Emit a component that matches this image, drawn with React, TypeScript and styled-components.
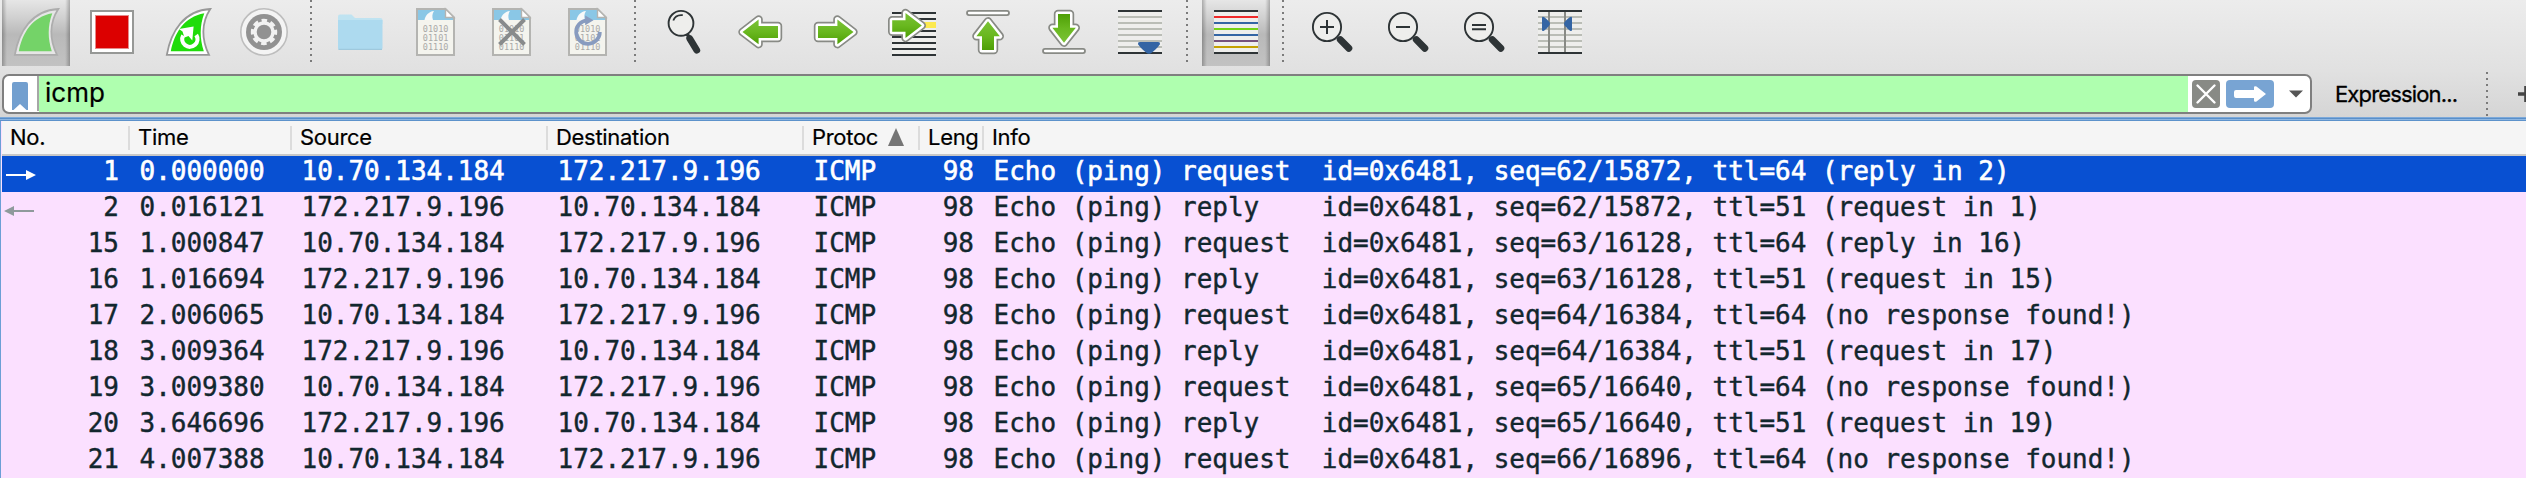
import React from "react";
import styled, { createGlobalStyle, css } from "styled-components";

const GlobalStyle = createGlobalStyle`
  html, body { margin: 0; padding: 0; background: #fbe0ff; overflow: hidden; }
  * { box-sizing: border-box; }
`;

const Window = styled.div`
  display: flex;
  flex-direction: column;
  width: 2526px;
  height: 478px;
  overflow: hidden;
  font-family: Inter, "Liberation Sans", sans-serif;
  color: #000;
`;

const Chrome = styled.header`
  flex: none;
  height: 117px;
  background: linear-gradient(#ececec, #e1e1e1 60%, #d5d5d5);
`;

const Toolbar = styled.div`
  display: flex;
  align-items: flex-start;
  height: 74px;
  padding-left: 2px;
`;

const ToolGroup = styled.div`
  display: flex;
  gap: 8px;
`;

const ToolButton = styled.button<{ $pressed?: boolean }>`
  width: 68px;
  height: 66px;
  padding: 0;
  border: 0;
  background: none;
  ${(p) =>
    p.$pressed &&
    css`
      background:
        linear-gradient(90deg, rgba(0, 0, 0, 0.25), rgba(0, 0, 0, 0.04) 4px, transparent 5px, transparent 63px, rgba(0, 0, 0, 0.04) 64px, rgba(0, 0, 0, 0.25)),
        linear-gradient(#e6e6e6, #d2d2d2 25%, #b9b9b9 52%, #c2c2c2);
    `}
  svg { display: block; }
`;

const Dots = styled.div<{ $height: number }>`
  flex: none;
  width: 2px;
  height: ${(p) => p.$height}px;
  background: repeating-linear-gradient(#7b7b7b 0 2px, transparent 2px 6px);
`;

const ToolDots = styled(Dots)`
  margin: 0 14px 0 12px;
`;

const FilterBar = styled.div`
  display: flex;
  height: 42px;
  padding-left: 2px;
`;

const FilterBox = styled.div`
  display: flex;
  flex: none;
  width: 2310px;
  height: 40px;
  border: 2px solid #7f7f7f;
  border-radius: 7px;
  background: #fff;
  overflow: hidden;
`;

const Bookmark = styled.button`
  flex: none;
  width: 35px;
  height: 35px;
  padding: 4px 0 0 8px;
  border: 0;
  border-right: 2px solid #a6a6a6;
  background: none;
  svg { display: block; }
`;

const FilterText = styled.div`
  flex: none;
  width: 2149px;
  padding-left: 6px;
  background: #afffaf;
  font-size: 26px;
  line-height: 34px;
  -webkit-text-stroke: 0.2px;
`;

const FilterActions = styled.div`
  display: flex;
  flex: none;
  gap: 6px;
  padding: 4px 0 0 4px;
  svg { display: block; }
`;

const Expression = styled.div`
  flex: none;
  width: 149px;
  padding-left: 23px;
  font-size: 22px;
  line-height: 40px;
  letter-spacing: -0.85px;
  white-space: nowrap;
  -webkit-text-stroke: 0.3px;
`;

const BarDots = styled(Dots)`
  margin: -2px 0 0 25px;
`;

const AddButton = styled.div`
  flex: none;
  width: 18px;
  margin-left: 30px;
  svg { display: block; }
`;

const Divider = styled.div`
  flex: none;
  height: 4px;
  background: linear-gradient(#7ca9da 0 1px, #5a8fc8 1px 2px, #8db6e2 2px 3px, #5d92cb 3px 4px);
`;

const PacketList = styled.main`
  flex: 1;
  border-left: 1px solid #6c9fd6;
  padding-left: 1px;
  background: #fbe0ff;
`;

const columns = css`
  display: grid;
  grid-template-columns: 128px 162px 256px 256px 116px 64px 1fr;
`;

const HeaderRow = styled.div`
  ${columns}
  height: 35px;
  border-bottom: 2px solid #c8c8c8;
  background: #f5f5f5;
`;

const HeaderCell = styled.div<{ $last?: boolean }>`
  display: flex;
  height: 24px;
  margin-top: 5px;
  padding-left: 8px;
  border-right: ${(p) => (p.$last ? "0" : "2px solid #dcdcdc")};
  font-size: 22px;
  line-height: 22px;
  letter-spacing: -0.3px;
  white-space: nowrap;
  -webkit-text-stroke: 0.2px;
`;

const SortMark = styled.span`
  margin: 2px 0 0 10px;
  svg { display: block; }
`;

const Row = styled.div<{ $selected?: boolean }>`
  ${columns}
  height: 36px;
  font-family: "DejaVu Sans Mono", monospace;
  font-size: 26px;
  line-height: 31px;
  letter-spacing: -0.022px;
  white-space: pre;
  -webkit-text-stroke: ${(p) => (p.$selected ? 0.6 : 0.4)}px;
  color: ${(p) => (p.$selected ? "#fff" : "#12272e")};
  background: ${(p) => (p.$selected ? "#0850d2" : "#fbe0ff")};
`;

const Cell = styled.div`
  padding-left: 9.5px;
`;

const NumberCell = styled.div`
  display: flex;
  justify-content: space-between;
  padding-right: 11px;
`;

const LengthCell = styled.div`
  padding-right: 10px;
  text-align: right;
`;

const INK = "#2e3436";
const BLUE = "#3465a4";

const Canvas = ({ children }: { children: React.ReactNode }) => (
  <svg width="68" height="66" viewBox="0 0 68 66" fill="none">{children}</svg>
);

const Fin = ({ inner, edge = "#989898", body = "#fff" }: { inner: string; edge?: string; body?: string }) => (
  <>
    <path d="M12.8 54.9C17 31 30 10.5 56.3 9C47 23 47.5 40 55 54.9Z" fill={body} stroke={edge} strokeWidth="1.8" />
    <path d="M16.8 51.2C20.5 33 30 17 50.3 13.3C45.5 26 45.8 39 49.8 51.2Z" fill={inner} />
  </>
);

const StartIcon = () => <Canvas><Fin inner="#74d368" edge="#adadad" body="#e6e6e6" /></Canvas>;

const StopIcon = () => (
  <Canvas>
    <rect x="13" y="11" width="42" height="42" fill="#fff" stroke="#969896" strokeWidth="2" />
    <rect x="17.5" y="15.5" width="33" height="33" fill="#dc0000" stroke="#e58a8a" strokeWidth="1" />
  </Canvas>
);

const RestartIcon = () => (
  <Canvas>
    <Fin inner="#1fdc0a" />
    <path d="M29.2 35.5A7.6 7.6 0 1 0 42.2 35" stroke="#fff" strokeWidth="4.2" />
    <path d="M25 29L39.6 26.5L38.3 40.5L34.5 36L30.5 37.5L28.5 31.5Z" fill="#fff" />
  </Canvas>
);

const GearIcon = () => (
  <Canvas>
    <circle cx="34" cy="32" r="23.2" fill="#f4f4f4" stroke="#bdbdbd" strokeWidth="1.6" />
    <circle cx="34" cy="32" r="18" fill="#929292" />
    <circle cx="34" cy="32" r="9" stroke="#f2f2f2" strokeWidth="3.4" />
    <circle cx="34" cy="32" r="11.4" stroke="#f2f2f2" strokeWidth="3.6" strokeDasharray="5.4 3.55" strokeDashoffset="2.7" />
  </Canvas>
);

const FolderIcon = () => (
  <Canvas>
    <path d="M12 22V16.5Q12 14.5 14 14.5H25.5L29 18H54.5Q56.5 18 56.5 20V24H12Z" fill="#bfe3f1" />
    <path d="M12 20H56.5V48Q56.5 50 54.5 50H14Q12 50 12 48Z" fill="#addaef" />
    <path d="M12.5 49.3H56" stroke="#9fc9dd" strokeWidth="1.2" />
  </Canvas>
);

const BinaryLine = styled.text`
  font: 8.5px "DejaVu Sans Mono", monospace;
  fill: #aaaaa8;
`;

const FileShape = () => (
  <>
    <path d="M15 9H43.5L52 17.5V55H15Z" fill="#f4f4ee" />
    <path d="M15 9H43.5V17.5H52V20H15Z" fill="#8ac7e6" />
    <path d="M22.5 20C23.5 15.5 26.5 11.5 32 11C30 14 30 17 31 20Z" fill="#f7f9f9" />
    <path d="M15 9H43.5L52 17.5V55H15Z" stroke="#b4b4b1" strokeWidth="2" />
    <path d="M43.5 9V17.5H52Z" fill="#fff" stroke="#b4b4b1" strokeWidth="1.4" />
    <BinaryLine x="20.8" y="32.3">01010</BinaryLine>
    <BinaryLine x="20.8" y="41.3">01101</BinaryLine>
    <BinaryLine x="20.8" y="50.3">01110</BinaryLine>
  </>
);

const SaveIcon = () => <Canvas><FileShape /></Canvas>;

const CloseFileIcon = () => (
  <Canvas>
    <FileShape />
    <path d="M21.5 19.5L46.5 44.5M46.5 19.5L21.5 44.5" stroke="#888b8c" strokeWidth="4" />
  </Canvas>
);

const ReloadIcon = () => (
  <Canvas>
    <FileShape />
    <path d="M45.8 32A11.8 11.8 0 1 1 33 20.3" stroke="#889bbf" strokeWidth="3.8" />
    <path d="M31.2 15.5L39.5 20.2L31.2 25.2Z" fill="#889bbf" />
  </Canvas>
);

const FindIcon = () => (
  <Canvas>
    <circle cx="31" cy="23.3" r="12.4" fill="#eeeeec" stroke={INK} strokeWidth="1.9" />
    <path d="M23.3 20.5C24.5 17 28 14.7 32.8 15.2" stroke={INK} strokeWidth="1.8" />
    <path d="M37 34L39.5 37.5" stroke={INK} strokeWidth="3.5" />
    <path d="M39.7 38.5L46.8 50.2" stroke={INK} strokeWidth="6.8" strokeLinecap="round" />
  </Canvas>
);

const GreenShape = ({ d, transform }: { d: string; transform?: string }) => (
  <g transform={transform} strokeLinejoin="round">
    <path d={d} stroke="#888a85" strokeWidth="8.4" />
    <path d={d} stroke="#fff" strokeWidth="5" />
    <path d={d} fill="url(#leaf)" />
  </g>
);

const LeafGradient = () => (
  <defs>
    <linearGradient id="leaf" x1="0" y1="0" x2="0" y2="1">
      <stop offset="0" stopColor="#7ac236" />
      <stop offset="0.5" stopColor="#69b81f" />
      <stop offset="1" stopColor="#4e9f06" />
    </linearGradient>
  </defs>
);

const RIGHT = "M16 26H35.4V19.5L51.5 32L35.4 44.2V38H16Z";
const UP = "M28 50V36.2H22.4L34 21.3L45.8 36.2H40V50Z";

const BackIcon = () => <Canvas><LeafGradient /><GreenShape d={RIGHT} transform="matrix(-1 0 0 1 68 0)" /></Canvas>;
const ForwardIcon = () => <Canvas><GreenShape d={RIGHT} /></Canvas>;

const Lines = ({ x = 12, list }: { x?: number; list: [number, string][] }) => (
  <>{list.map(([y, color]) => <rect key={y} x={x} y={y - 1} width="44" height="2" fill={color} />)}</>
);

const GoToIcon = () => (
  <Canvas>
    <rect x="14" y="12" width="44" height="44" fill="#eeeeec" />
    <Lines x={14} list={[[13, INK], [19, INK], [31, INK], [37, INK], [43, INK], [49, INK], [55, INK]]} />
    <rect x="14" y="22" width="44" height="6" fill="#fce94f" />
    <GreenShape d="M14.2 20.2H27.5V13L43.8 25.5L27.5 38V31.8H14.2Z" />
  </Canvas>
);

const Bar = ({ y }: { y: number }) => (
  <rect x="13" y={y} width="42" height="4.2" rx="2" fill="#fff" stroke="#888a85" strokeWidth="1.8" />
);

const FirstIcon = () => <Canvas><GreenShape d={UP} /><Bar y={10.9} /></Canvas>;
const LastIcon = () => <Canvas><GreenShape d={UP} transform="matrix(1 0 0 -1 0 64)" /><Bar y={48.9} /></Canvas>;

const PALE = "#babdb6";
const paleLines: [number, string][] = [[11, INK], [17, PALE], [23, PALE], [29, PALE], [35, PALE], [41, PALE], [47, PALE], [53, INK]];

const ScrollIcon = () => (
  <Canvas>
    <rect x="12" y="10" width="44" height="44" fill="#eeeeec" />
    <Lines list={paleLines} />
    <path d="M34 42H52Q54.5 42 53.8 44.2Q52.5 47 46 52.5Q43 55 40 52.5Q33.5 47 32.2 44.2Q31.5 42 34 42Z" fill={BLUE} />
  </Canvas>
);

const ColorizeIcon = () => (
  <Canvas>
    <rect x="12" y="10" width="44" height="44" fill="#eeeeec" />
    <Lines list={[[11, INK], [17, "#ef2929"], [23, BLUE], [29, "#73d216"], [35, BLUE], [41, "#75507b"], [47, "#c4a000"], [53, INK]]} />
  </Canvas>
);

const ZoomIcon = ({ mark }: { mark: string }) => (
  <Canvas>
    <circle cx="29" cy="27" r="14.1" fill="#eeeeec" stroke={INK} strokeWidth="1.9" />
    <path d={mark} stroke={INK} strokeWidth="2" />
    <path d="M42.3 39.6L50.8 48.3" stroke={INK} strokeWidth="7" strokeLinecap="round" />
  </Canvas>
);

const ResizeIcon = () => (
  <Canvas>
    <rect x="12" y="10" width="44" height="44" fill="#eeeeec" />
    <Lines list={paleLines} />
    <path d="M23 10V54M39 10V54" stroke="#888a85" strokeWidth="2" />
    <path d="M16 17.5Q16 16.2 18 17Q24 21.5 24 23.8Q24 26 18 30.7Q16 31.5 16 30Z" fill={BLUE} />
    <path d="M46 17.5Q46 16.2 44 17Q38 21.5 38 23.8Q38 26 44 30.7Q46 31.5 46 30Z" fill={BLUE} />
    <path d="M12 11H56M12 53H56" stroke={INK} strokeWidth="2" />
  </Canvas>
);

type Tool = { label: string; icon: React.ReactNode; pressed?: boolean };

const toolGroups: Tool[][] = [
  [
    { label: "Start capture", icon: <StartIcon />, pressed: true },
    { label: "Stop capture", icon: <StopIcon /> },
    { label: "Restart capture", icon: <RestartIcon /> },
    { label: "Capture options", icon: <GearIcon /> },
  ],
  [
    { label: "Open", icon: <FolderIcon /> },
    { label: "Save", icon: <SaveIcon /> },
    { label: "Close", icon: <CloseFileIcon /> },
    { label: "Reload", icon: <ReloadIcon /> },
  ],
  [
    { label: "Find packet", icon: <FindIcon /> },
    { label: "Back", icon: <BackIcon /> },
    { label: "Forward", icon: <ForwardIcon /> },
    { label: "Go to packet", icon: <GoToIcon /> },
    { label: "First packet", icon: <FirstIcon /> },
    { label: "Last packet", icon: <LastIcon /> },
    { label: "Auto scroll", icon: <ScrollIcon /> },
  ],
  [{ label: "Colorize", icon: <ColorizeIcon />, pressed: true }],
  [
    { label: "Zoom in", icon: <ZoomIcon mark="M22 27H36M29 20V34" /> },
    { label: "Zoom out", icon: <ZoomIcon mark="M22 27H36" /> },
    { label: "Normal size", icon: <ZoomIcon mark="M22 25H36M22 29.3H36" /> },
    { label: "Resize columns", icon: <ResizeIcon /> },
  ],
];

const A = "10.70.134.184";
const B = "172.217.9.196";

const packets = [
  { no: 1, time: "0.000000", out: true, seq: "62/15872", note: "reply in 2" },
  { no: 2, time: "0.016121", out: false, seq: "62/15872", note: "request in 1" },
  { no: 15, time: "1.000847", out: true, seq: "63/16128", note: "reply in 16" },
  { no: 16, time: "1.016694", out: false, seq: "63/16128", note: "request in 15" },
  { no: 17, time: "2.006065", out: true, seq: "64/16384", note: "no response found!" },
  { no: 18, time: "3.009364", out: false, seq: "64/16384", note: "request in 17" },
  { no: 19, time: "3.009380", out: true, seq: "65/16640", note: "no response found!" },
  { no: 20, time: "3.646696", out: false, seq: "65/16640", note: "request in 19" },
  { no: 21, time: "4.007388", out: true, seq: "66/16896", note: "no response found!" },
];

const Relation = ({ no }: { no: number }) => (
  <svg width="40" height="36" viewBox="0 0 40 36">
    {no === 1 && <path d="M4 18H24V14L34 19L24 24V20H4Z" fill="#fff" />}
    {no === 2 && <path d="M32 18H12V14L2 19L12 24V20H32Z" fill="#8f9a9c" />}
  </svg>
);

export default function App() {
  return (
    <Window>
      <GlobalStyle />
      <Chrome>
        <Toolbar>
          {toolGroups.map((group, i) => (
            <React.Fragment key={i}>
              {i > 0 && <ToolDots $height={62} />}
              <ToolGroup>
                {group.map((tool) => (
                  <ToolButton key={tool.label} $pressed={tool.pressed} aria-label={tool.label}>
                    {tool.icon}
                  </ToolButton>
                ))}
              </ToolGroup>
            </React.Fragment>
          ))}
        </Toolbar>
        <FilterBar>
          <FilterBox>
            <Bookmark aria-label="Bookmarks">
              <svg width="16" height="28"><path d="M0 2Q0 0 2 0H14Q16 0 16 2V28H14.5L8 22L1.5 28H0Z" fill="#729fcf" /></svg>
            </Bookmark>
            <FilterText>icmp</FilterText>
            <FilterActions>
              <svg width="28" height="28">
                <rect width="28" height="28" rx="4" fill="#888a85" />
                <path d="M5.5 5.5L22.5 22.5M22.5 5.5L5.5 22.5" stroke="#fff" strokeWidth="2.4" strokeLinecap="round" />
              </svg>
              <svg width="48" height="28">
                <rect width="48" height="28" rx="4" fill="#78a4d3" />
                <path d="M10 10H28V7.5Q28 5.5 30.5 6.5L40 14L30.5 21.5Q28 22.5 28 20.5V18H10Q8 18 8 16V12Q8 10 10 10Z" fill="#fff" />
              </svg>
              <svg width="24" height="28"><path d="M9 10.5H23L16 17.5Z" fill="#555" /></svg>
            </FilterActions>
          </FilterBox>
          <Expression>Expression...</Expression>
          <BarDots $height={44} />
          <AddButton>
            <svg width="18" height="40"><path d="M0 20H18M8 12V28" stroke="#444" strokeWidth="3.6" /></svg>
          </AddButton>
        </FilterBar>
      </Chrome>
      <Divider />
      <PacketList>
        <HeaderRow>
          <HeaderCell>No.</HeaderCell>
          <HeaderCell>Time</HeaderCell>
          <HeaderCell>Source</HeaderCell>
          <HeaderCell>Destination</HeaderCell>
          <HeaderCell>
            Protoc
            <SortMark><svg width="16" height="18"><path d="M8 0L16 18H0Z" fill="#757575" /></svg></SortMark>
          </HeaderCell>
          <HeaderCell>Leng</HeaderCell>
          <HeaderCell $last>Info</HeaderCell>
        </HeaderRow>
        {packets.map((p) => (
          <Row key={p.no} $selected={p.no === 1}>
            <NumberCell><Relation no={p.no} />{p.no}</NumberCell>
            <Cell>{p.time}</Cell>
            <Cell>{p.out ? A : B}</Cell>
            <Cell>{p.out ? B : A}</Cell>
            <Cell>ICMP</Cell>
            <LengthCell>98</LengthCell>
            <Cell>
              {`Echo (ping) ${p.out ? "request" : "reply  "}  id=0x6481, seq=${p.seq}, ttl=${p.out ? 64 : 51} (${p.note})`}
            </Cell>
          </Row>
        ))}
      </PacketList>
    </Window>
  );
}
